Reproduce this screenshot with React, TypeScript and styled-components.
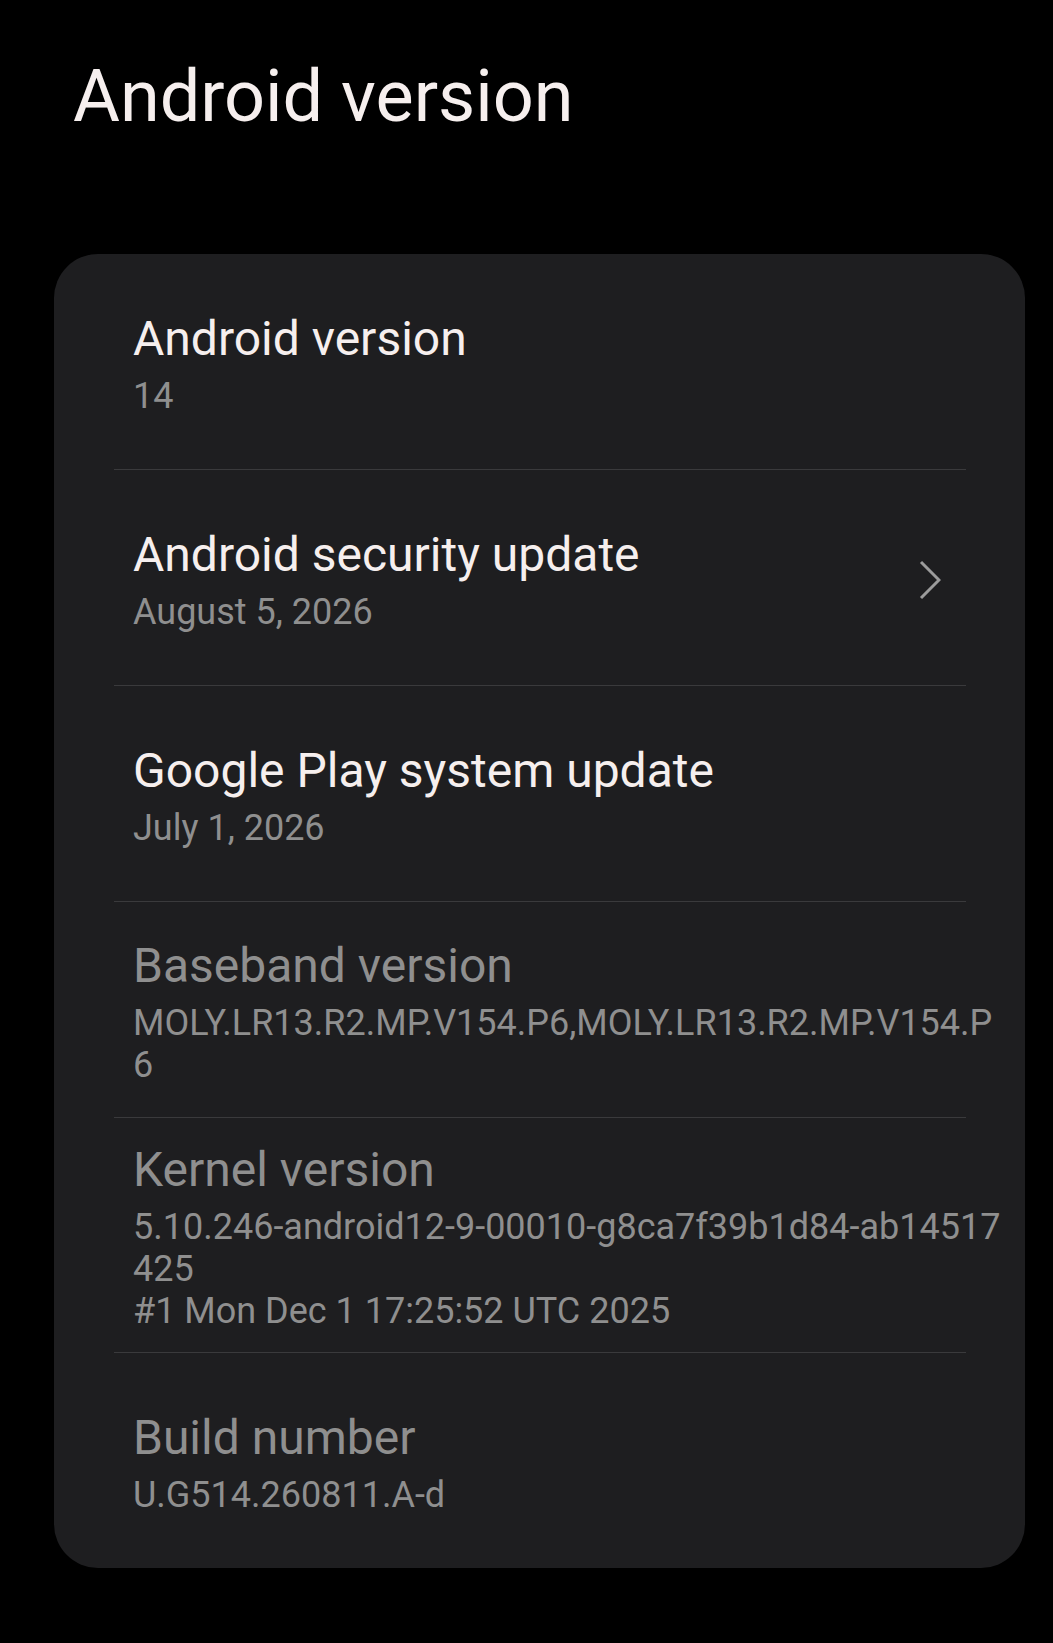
import React from 'react';
import styled, { createGlobalStyle } from 'styled-components';

type Item = {
  title: string;
  lines: string[];
  disabled?: boolean;
  link?: boolean;
};

const items: Item[] = [
  { title: 'Android version', lines: ['14'] },
  { title: 'Android security update', lines: ['August 5, 2026'], link: true },
  { title: 'Google Play system update', lines: ['July 1, 2026'] },
  {
    title: 'Baseband version',
    lines: ['MOLY.LR13.R2.MP.V154.P6,MOLY.LR13.R2.MP.V154.P', '6'],
    disabled: true,
  },
  {
    title: 'Kernel version',
    lines: [
      '5.10.246-android12-9-00010-g8ca7f39b1d84-ab14517',
      '425',
      '#1 Mon Dec 1 17:25:52 UTC 2025',
    ],
    disabled: true,
  },
  { title: 'Build number', lines: ['U.G514.260811.A-d'], disabled: true },
];

export default function App() {
  return (
    <>
      <GlobalStyle />
      <Screen>
        <PageTitle>Android version</PageTitle>
        <Card>
          {items.map((item, i) => (
            <React.Fragment key={item.title}>
              {i > 0 && <Divider />}
              <Row>
                <TextBlock>
                  <ItemTitle $disabled={item.disabled}>{item.title}</ItemTitle>
                  <Summary>
                    {item.lines.map((line) => (
                      <div key={line}>{line}</div>
                    ))}
                  </Summary>
                </TextBlock>
                {item.link && (
                  <Chevron viewBox="0 0 22 40" fill="none">
                    <path d="M2 2 L20 20 L2 38" stroke="#9c9c9c" strokeWidth="3" />
                  </Chevron>
                )}
              </Row>
            </React.Fragment>
          ))}
        </Card>
      </Screen>
    </>
  );
}

const GlobalStyle = createGlobalStyle`
  html, body {
    margin: 0;
    padding: 0;
    background: #000;
  }
  body {
    font-family: Roboto, "Noto Sans", "Liberation Sans", sans-serif;
  }
`;

const Screen = styled.div`
  width: 1053px;
  min-height: 1643px;
  background: #000;
  padding-top: 55px;
  box-sizing: border-box;
`;

const PageTitle = styled.h1`
  margin: 0 0 115px 73px;
  font-size: 72px;
  line-height: 84px;
  font-weight: 400;
  color: #f6efee;
`;

const Card = styled.div`
  margin-left: 54px;
  width: 971px;
  background: #1e1e20;
  border-radius: 44px;
  display: flex;
  flex-direction: column;
`;

const Row = styled.div`
  min-height: 215px;
  box-sizing: border-box;
  padding: 24px 84px 20px 79px;
  display: flex;
  align-items: center;
  justify-content: space-between;
`;

const TextBlock = styled.div`
  display: flex;
  flex-direction: column;
  gap: 8px;
  margin-right: -60px;
`;

const ItemTitle = styled.div<{ $disabled?: boolean }>`
  font-size: 48px;
  line-height: 56px;
  color: ${(p) => (p.$disabled ? '#8f8f8f' : '#f6efee')};
`;

const Summary = styled.div`
  font-size: 36px;
  line-height: 42px;
  color: #8f8f8f;
  white-space: nowrap;
`;

const Divider = styled.div`
  height: 1px;
  background: #3a3a3c;
  margin: 0 59px 0 60px;
`;

const Chevron = styled.svg`
  width: 22px;
  height: 40px;
  flex: none;
`;
